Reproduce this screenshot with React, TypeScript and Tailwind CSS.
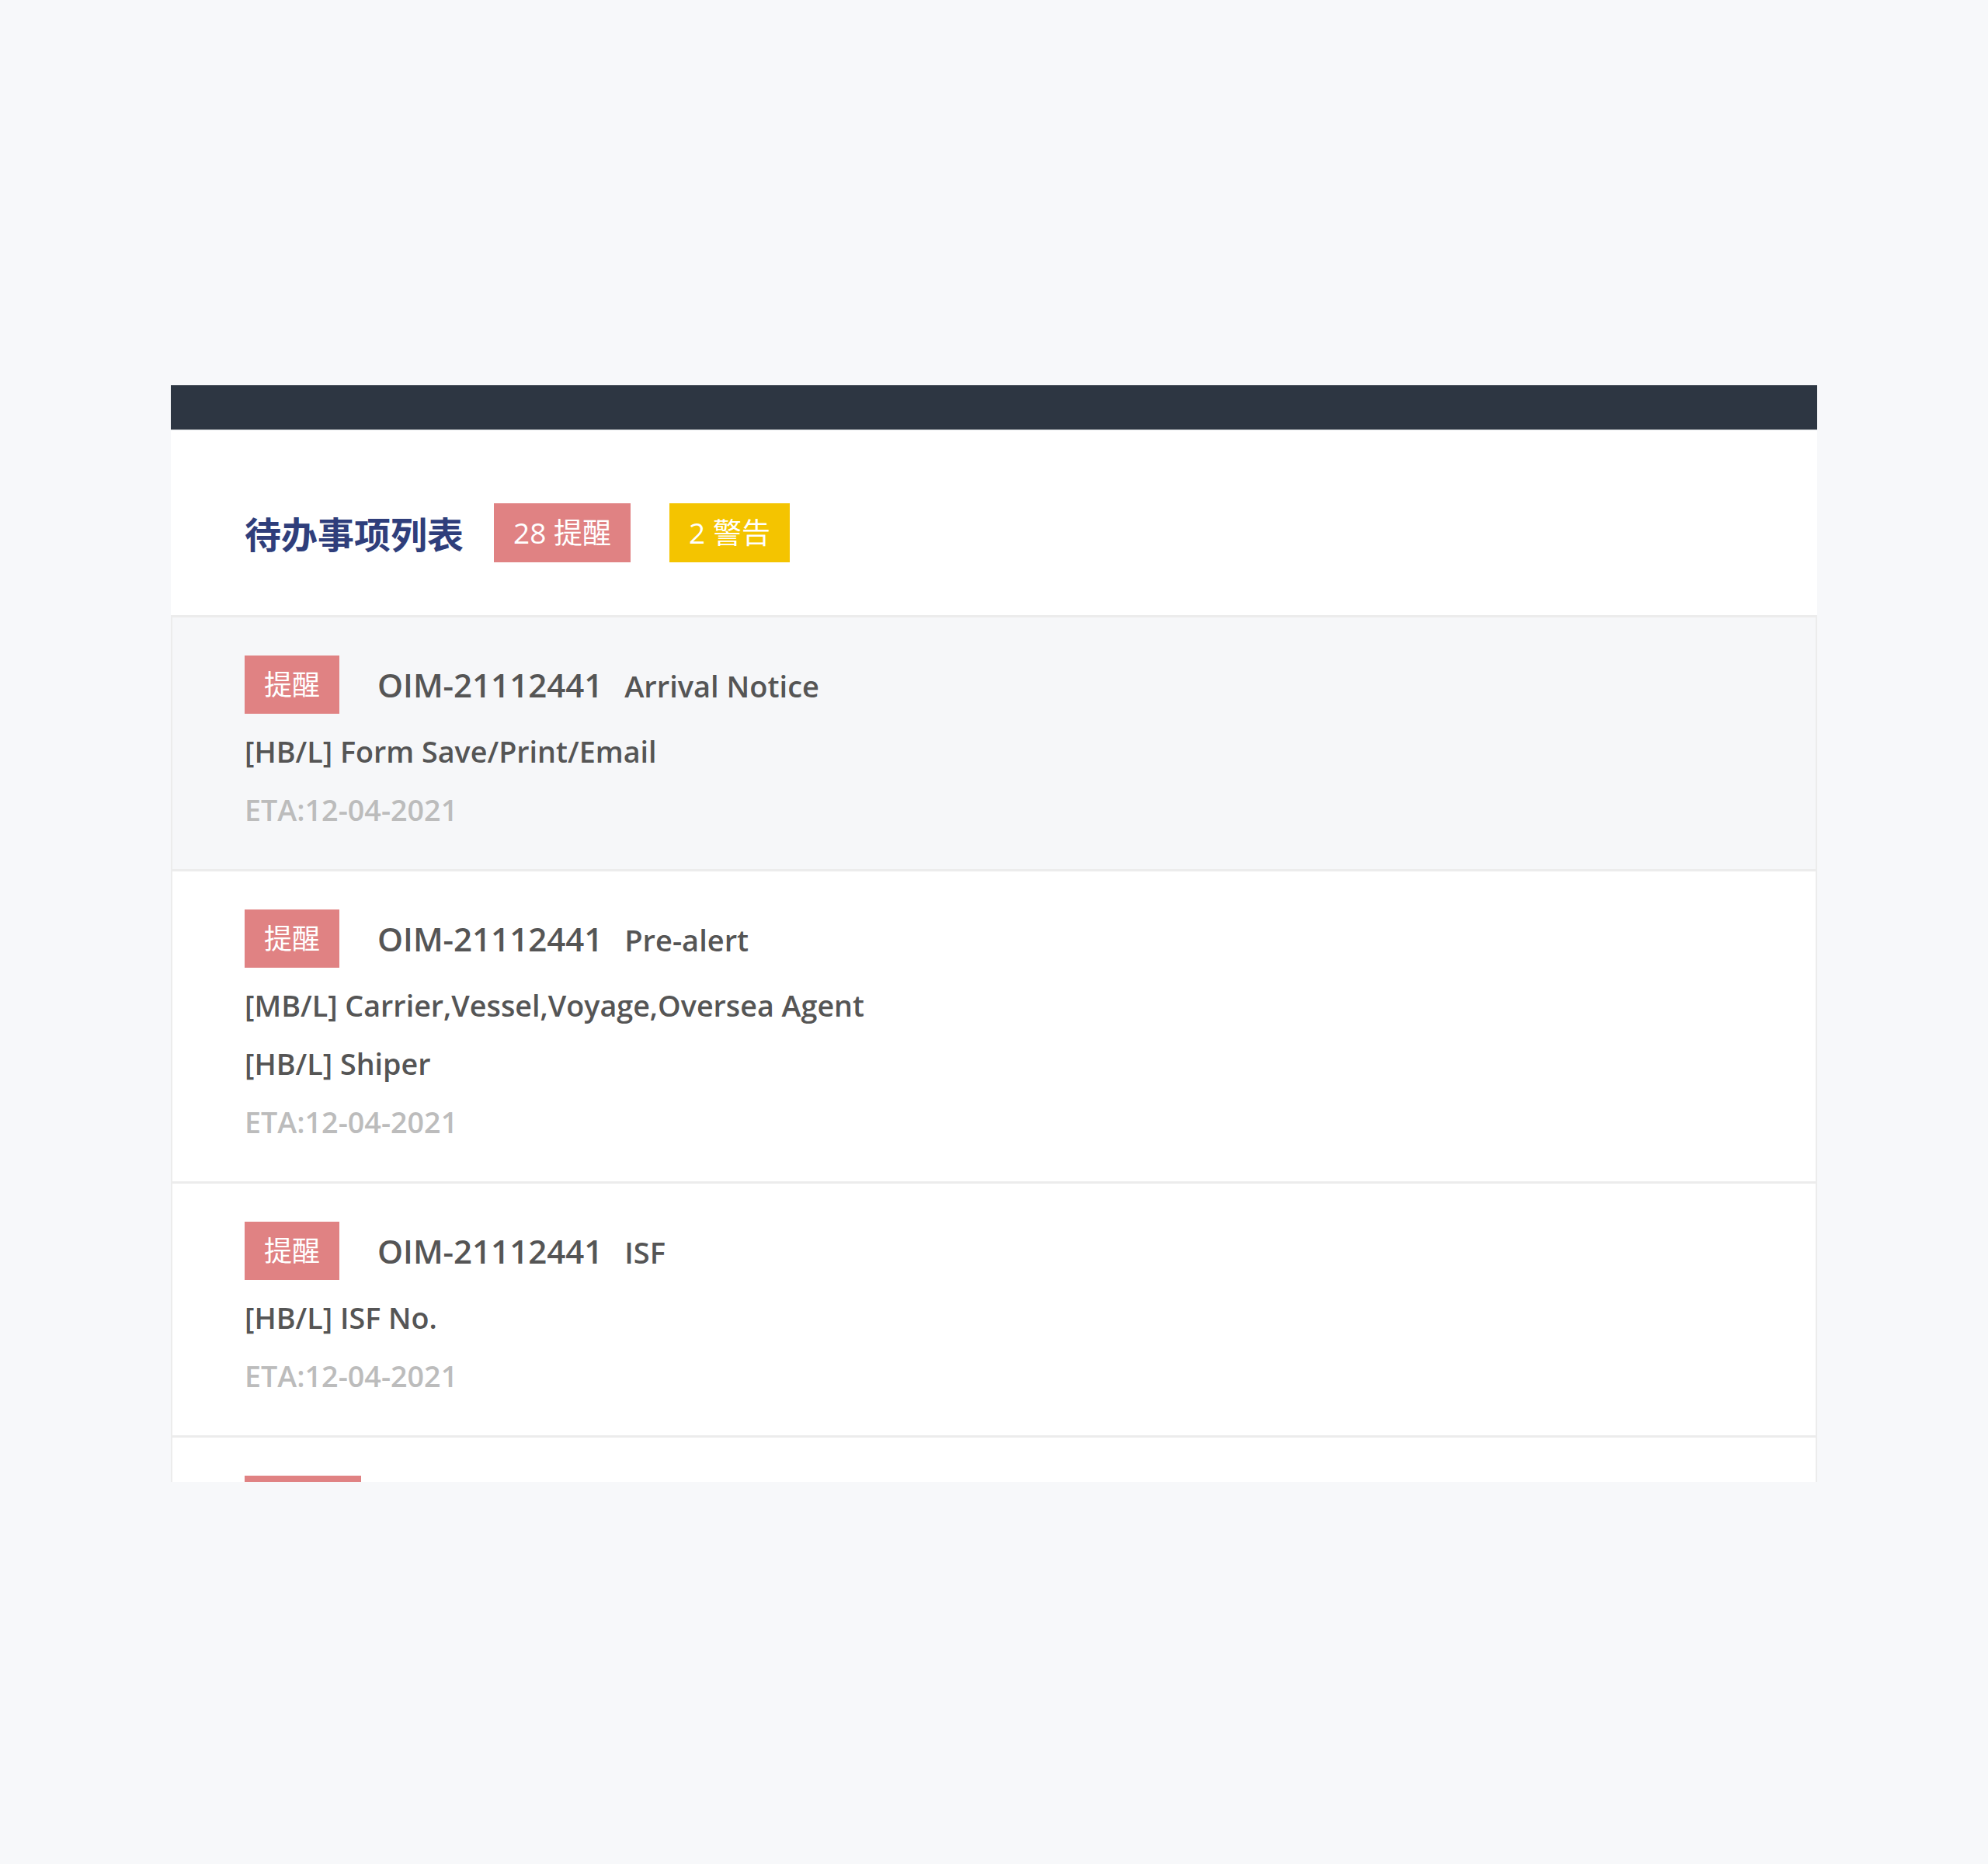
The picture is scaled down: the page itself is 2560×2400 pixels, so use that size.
import React from 'react';

type Todo = {
  id: string;
  tag: string;
  tagWidth: string;
  code: string;
  kind: string;
  details: string[];
  eta: string;
  highlighted?: boolean;
};

const todos: Todo[] = [
  {
    id: 't1',
    tag: '提醒',
    tagWidth: 'w-[122px]',
    code: 'OIM-21112441',
    kind: 'Arrival Notice',
    details: ['[HB/L] Form Save/Print/Email'],
    eta: 'ETA:12-04-2021',
    highlighted: true,
  },
  {
    id: 't2',
    tag: '提醒',
    tagWidth: 'w-[122px]',
    code: 'OIM-21112441',
    kind: 'Pre-alert',
    details: ['[MB/L] Carrier,Vessel,Voyage,Oversea Agent', '[HB/L] Shiper'],
    eta: 'ETA:12-04-2021',
  },
  {
    id: 't3',
    tag: '提醒',
    tagWidth: 'w-[122px]',
    code: 'OIM-21112441',
    kind: 'ISF',
    details: ['[HB/L] ISF No.'],
    eta: 'ETA:12-04-2021',
  },
  {
    id: 't4',
    tag: '提醒中',
    tagWidth: 'w-[150px]',
    code: 'OIM-21112441',
    kind: 'Delivery Order',
    details: ['[HB/L] Trucker'],
    eta: 'ETA:12-04-2021',
  },
];

function TodoRow({ todo }: { todo: Todo }) {
  return (
    <div
      className={`border-x-2 border-t-[3px] border-[#ececec] pb-[39px] pl-[93px] pt-[49px] ${
        todo.highlighted ? 'bg-[#f6f7f9]' : 'bg-white'
      }`}
    >
      <div className="flex h-[75px] items-center">
        <span
          className={`flex h-[75px] ${todo.tagWidth} items-center justify-center bg-[#e08283] text-[36px] text-white`}
        >
          {todo.tag}
        </span>
        <div className="ml-[49px] flex items-baseline text-[#555555]">
          <span className="text-[42px] font-semibold">{todo.code}</span>
          <span className="ml-[28px] text-[38px] font-semibold">{todo.kind}</span>
        </div>
      </div>
      <div className="mt-[11px]">
        {todo.details.map((line) => (
          <p key={line} className="text-[37.7px] font-semibold leading-[75px] text-[#555555]">
            {line}
          </p>
        ))}
        <p className="text-[37.7px] font-semibold leading-[75px] text-[#bcbcbc]">{todo.eta}</p>
      </div>
    </div>
  );
}

export default function App() {
  return (
    <div className="h-[2400px] w-[2560px] bg-[#f7f8fa] pt-[496px] font-['Open_Sans','Noto_Sans_CJK_SC',sans-serif]">
      <div className="ml-[220px] h-[1412px] w-[2120px] overflow-hidden">
        <div className="h-[58px] border-b border-[#d6d8db] bg-[#2d3642]" />
        <div className="flex h-[238px] items-start bg-white pl-[95px] pt-[94px]">
          <div className="flex h-[76px] items-center">
            <h2 className="text-[47px] font-bold text-[#2f3e7b] font-['Noto_Sans_CJK_SC',sans-serif]">
              待办事项列表
            </h2>
            <span className="ml-[39px] flex h-[76px] w-[176px] items-center justify-center bg-[#e08283] text-[37px] text-white">
              28 提醒
            </span>
            <span className="ml-[50px] flex h-[76px] w-[155px] items-center justify-center bg-[#f4c400] text-[37px] text-white">
              2 警告
            </span>
          </div>
        </div>
        {todos.map((todo) => (
          <TodoRow key={todo.id} todo={todo} />
        ))}
      </div>
    </div>
  );
}
